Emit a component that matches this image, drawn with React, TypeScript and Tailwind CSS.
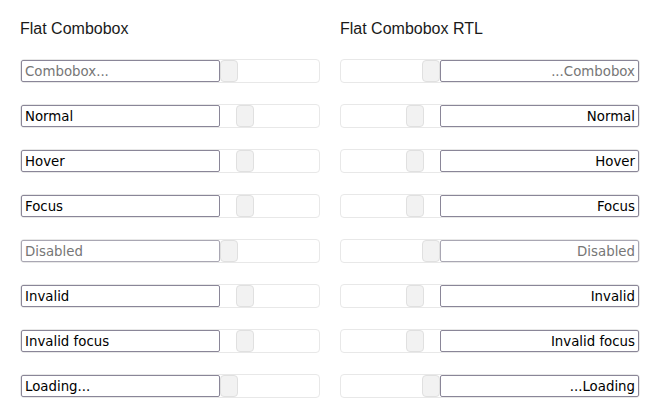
import React from "react";

type Row = { label: string; placeholder?: boolean; disabled?: boolean; shifted: boolean };

const rows: Row[] = [
  { label: "Combobox...", placeholder: true, shifted: false },
  { label: "Normal", shifted: true },
  { label: "Hover", shifted: true },
  { label: "Focus", shifted: true },
  { label: "Disabled", disabled: true, shifted: false },
  { label: "Invalid", shifted: true },
  { label: "Invalid focus", shifted: true },
  { label: "Loading...", shifted: false },
];

const rtlLabel = (r: Row) => {
  if (r.label === "Combobox...") return "...Combobox";
  if (r.label === "Loading...") return "...Loading";
  return r.label;
};

function Thumb() {
  return <div className="h-[22px] w-[18px] shrink-0 rounded-[4px] border border-[#e0e0e0] bg-[#f2f2f2]" />;
}

function Field({ row, rtl }: { row: Row; rtl: boolean }) {
  const muted = row.placeholder || row.disabled;
  const input = (
    <div
      className={
        "flex h-[22px] w-[199px] shrink-0 items-center rounded-[2px] border px-[3px] pt-[1px] text-[13.33px] " +
        (row.disabled ? "border-[#a9a7b3] " : "border-[#8a8698] ") +
        (muted ? "text-[#767676] " : "text-black ") +
        (rtl ? "justify-end" : "justify-start")
      }
    >
      {rtl ? rtlLabel(row) : row.label}
    </div>
  );
  const thumb = (
    <div className={row.shifted ? (rtl ? "mr-[16px]" : "ml-[16px]") : ""}>
      <Thumb />
    </div>
  );
  return (
    <div
      className={
        "flex h-[24px] w-[300px] items-center rounded-[4px] border border-[#e8e8e8] " +
        (rtl ? "justify-end" : "justify-start")
      }
    >
      {rtl ? (
        <>
          {thumb}
          {input}
        </>
      ) : (
        <>
          {input}
          {thumb}
        </>
      )}
    </div>
  );
}

function Column({ title, rtl }: { title: string; rtl: boolean }) {
  return (
    <div className="flex w-[300px] flex-col">
      <div className="h-[20px] text-[16px] leading-[20px] text-[#1a1a1a]" style={{ fontFamily: '"Liberation Sans", Arial, sans-serif' }}>
        {title}
      </div>
      <div className="mt-[20px] flex flex-col gap-[21px]">
        {rows.map((r) => (
          <Field key={r.label} row={r} rtl={rtl} />
        ))}
      </div>
    </div>
  );
}

export default function App() {
  return (
    <div
      className="flex h-[419px] w-[660px] gap-[20px] bg-white pl-[20px] pt-[19px]"
      style={{ fontFamily: '"DejaVu Sans", sans-serif' }}
    >
      <Column title="Flat Combobox" rtl={false} />
      <Column title="Flat Combobox RTL" rtl={true} />
    </div>
  );
}
